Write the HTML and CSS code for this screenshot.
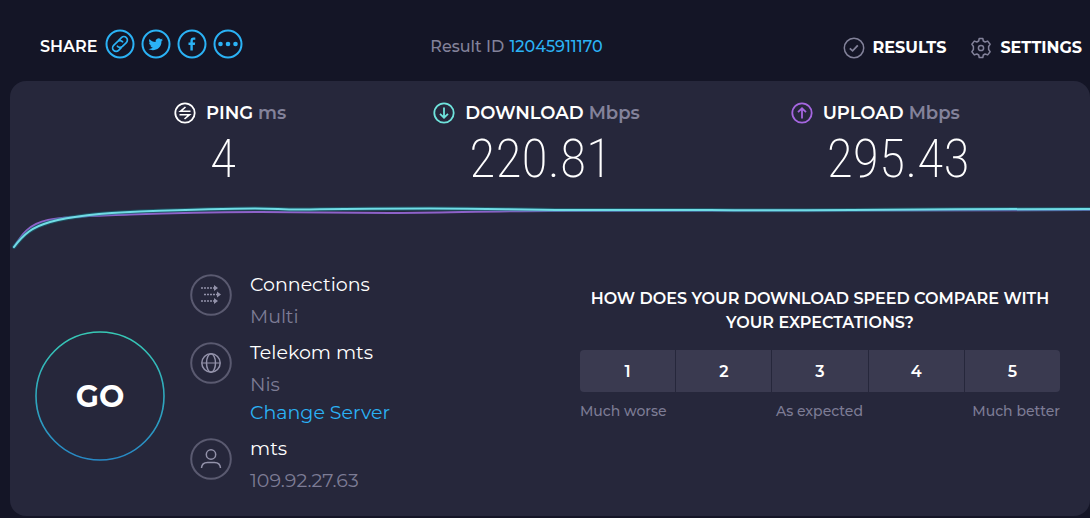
FILE: index.html
```html
<!DOCTYPE html>
<html lang="en">
<head>
<meta charset="utf-8">
<meta name="viewport" content="width=device-width, initial-scale=1">
<title>Speed test result</title>
<link rel="stylesheet" href="styles.css">
</head>
<body>
<header class="topbar">
  <div class="share">
    <span class="share-label">SHARE</span>
    <a class="share-link" href="#link" aria-label="Copy link">
      <svg viewBox="0 0 30 30"><circle cx="15" cy="15" r="13.5"/><g transform="rotate(-45 15 15)" stroke-width="1.700"><path d="M14 18.500H9.500a3.500 3.500 0 0 1 0-7H15a3.500 3.500 0 0 1 3.200 4.500M16 11.500h4.500a3.500 3.500 0 0 1 0 7H15a3.500 3.500 0 0 1-3.200-4.500"/></g></svg>
    </a>
    <a class="share-link" href="#twitter" aria-label="Twitter">
      <svg viewBox="0 0 30 30"><circle cx="15" cy="15" r="13.5"/><path class="solid" d="M22 10.700c-.5.300-1.100.400-1.700.500.600-.400 1.100-.900 1.300-1.600-.6.300-1.200.600-1.900.700a3 3 0 0 0-5.100 2.700c-2.500-.1-4.700-1.300-6.100-3.100-.9 1.500-.4 3.100.9 4-.5 0-.9-.1-1.300-.4 0 1.500 1 2.700 2.400 3-.4.100-.9.100-1.300 0 .4 1.200 1.500 2 2.800 2.100A6 6 0 0 1 7.500 20c4 2.500 13 1.300 13-7.700.6-.4 1.100-1 1.500-1.600z"/></svg>
    </a>
    <a class="share-link" href="#facebook" aria-label="Facebook">
      <svg viewBox="0 0 30 30"><circle cx="15" cy="15" r="13.5"/><path class="solid" d="M13.400 21.500V16h-1.900v-2.400h1.900v-1.700c0-2.200 1.300-3.400 3.100-3.400h1.800v2.200h-1.200c-1 0-1.300.5-1.300 1.300v1.600h2.400l-.4 2.400h-2v5.500z"/></svg>
    </a>
    <a class="share-link" href="#more" aria-label="More">
      <svg viewBox="0 0 30 30"><circle cx="15" cy="15" r="13.5"/><g class="solid"><circle cx="7.500" cy="15" r="2.300"/><circle cx="15" cy="15" r="2.300"/><circle cx="22.500" cy="15" r="2.300"/></g></svg>
    </a>
  </div>
  <p class="result">Result ID <a href="#result">12045911170</a></p>
  <nav class="menu">
    <a href="#results">
      <svg viewBox="0 0 22 22"><circle cx="11" cy="11" r="9.700"/><path d="M6.800 11.300l2.800 2.500 5.200-5.400" stroke-width="1.800"/></svg>
      RESULTS
    </a>
    <a href="#settings">
      <svg viewBox="0 0 22 22"><path stroke-linejoin="round" d="M9.200 1.500h3.600l.5 2.500 1.800 1 2.600-.9 2.400 3.200-1.500 2.200v3l1.500 2.200-2.400 3.200-2.600-.9-1.800 1-.5 2.500H9.200L8.700 18l-1.800-1-2.600.9-2.400-3.200 1.500-2.200v-3L1.900 7.300l2.400-3.200 2.600.9 1.800-1z"/><circle cx="11" cy="11" r="2.600"/></svg>
      SETTINGS
    </a>
  </nav>
</header>

<main class="panel">
  <section class="stats">
    <div class="stat">
      <h2 class="stat-name">
        <svg class="ping" viewBox="0 0 22 22"><circle cx="11" cy="11" r="9.700"/><path stroke-width="1.600" d="M16.500 9.300H6.500l5-4.300M5.500 12.700h10l-5 4.300"/></svg>
        <span>PING <small>ms</small></span>
      </h2>
      <p class="stat-value">4</p>
    </div>
    <div class="stat">
      <h2 class="stat-name">
        <svg class="down" viewBox="0 0 22 22"><circle cx="11" cy="11" r="9.700"/><path d="M11 5.500v10M7 11.800l4 3.900 4-3.900"/></svg>
        <span>DOWNLOAD <small>Mbps</small></span>
      </h2>
      <p class="stat-value">220.81</p>
    </div>
    <div class="stat">
      <h2 class="stat-name">
        <svg class="up" viewBox="0 0 22 22"><circle cx="11" cy="11" r="9.700"/><path d="M11 16.500v-10M7 10.200l4-3.900 4 3.900"/></svg>
        <span>UPLOAD <small>Mbps</small></span>
      </h2>
      <p class="stat-value">295.43</p>
    </div>
  </section>

  <svg class="chart" viewBox="0 0 1080 60" preserveAspectRatio="none" aria-hidden="true">
    <path class="line-up" d="M4 51C12 38 19 28 38 24S80 20 120 18.500 200 16 250 16 330 17 380 17 480 15 540 15L1080 14"/>
    <path class="glow" d="M4 51C14 38 22 31 40 26S90 17 130 15.500 220 12.500 245 12.500 270 14 300 13.500 350 12.500 420 12.500 500 14 560 14H700C800 15 900 13 1080 13"/>
    <path class="line-down" d="M4 51C14 38 22 31 40 26S90 17 130 15.500 220 12.500 245 12.500 270 14 300 13.500 350 12.500 420 12.500 500 14 560 14H700C800 15 900 13 1080 13"/>
  </svg>

  <section class="lower">
    <button class="go" type="button">
      <svg viewBox="0 0 130 130" aria-hidden="true">
        <defs><linearGradient id="ring" x1="0" y1="0" x2="0" y2="1"><stop offset="0" stop-color="#37c9b5"/><stop offset="1" stop-color="#2788c5"/></linearGradient></defs>
        <circle cx="65" cy="65" r="64" fill="none" stroke="url(#ring)" stroke-width="1.600"/>
      </svg>
      <span>GO</span>
    </button>

    <div class="details">
      <div class="detail">
        <svg viewBox="0 0 42 42"><circle class="ring" cx="21" cy="21" r="19.800"/><path stroke-dasharray="2 1" d="M11 14h14M14 20.500h14M11 27h14"/><path class="tip" d="M24 11l4 3-4 3zM27 17.500l4 3-4 3zM24 24l4 3-4 3z"/></svg>
        <div><h3>Connections</h3><p>Multi</p></div>
      </div>
      <div class="detail">
        <svg viewBox="0 0 42 42"><circle class="ring" cx="21" cy="21" r="19.800"/><circle cx="21" cy="21" r="9.200"/><ellipse cx="21" cy="21" rx="4.500" ry="9.200"/><path d="M12 21h18" stroke-width="1.200"/></svg>
        <div><h3>Telekom mts</h3><p>Nis</p><a href="#servers">Change Server</a></div>
      </div>
      <div class="detail">
        <svg viewBox="0 0 42 42"><circle class="ring" cx="21" cy="21" r="19.800"/><circle cx="21" cy="16.500" r="4.700"/><path d="M11.500 30c.3-4 3-5.500 6-5.500h7c3 0 5.700 1.500 6 5.500"/></svg>
        <div><h3>mts</h3><p>109.92.27.63</p></div>
      </div>
    </div>

    <div class="survey">
      <h2>HOW DOES YOUR DOWNLOAD SPEED COMPARE WITH YOUR EXPECTATIONS?</h2>
      <div class="scale">
        <button type="button">1</button><button type="button">2</button><button type="button">3</button><button type="button">4</button><button type="button">5</button>
      </div>
      <div class="legend"><span>Much worse</span><span>As expected</span><span>Much better</span></div>
    </div>
  </section>
</main>
</body>
</html>
```
FILE: styles.css
```css
* { box-sizing: border-box; margin: 0; padding: 0; }
body {
  min-height: 100vh;
  background: #141526;
  color: #fff;
  font-family: Montserrat, Inter, "Liberation Sans", sans-serif;
  font-size: 16px;
}
a { color: #2bb2f5; text-decoration: none; }
button { border: 0; color: #fff; font: inherit; font-weight: 600; cursor: pointer; }
svg { flex: none; fill: none; }

.topbar {
  display: grid;
  grid-template-columns: 391fr 413fr auto;
  align-items: center;
  padding: 26px 8px 20px 40px;
}
.share { display: flex; align-items: center; gap: 6px; height: 35px; }
.share-label { font-weight: 600; line-height: 20px; margin: 6px 2px 0 0; }
.share-link { display: flex; }
.share-link svg { width: 30px; height: 30px; stroke: #2bb2f5; stroke-width: 2; }
.share-link .solid { fill: #2bb2f5; stroke: none; }
.result { color: #83829a; font-weight: 500; line-height: 20px; padding-top: 6px; }
.result a { margin-left: 1px; }
.menu { display: flex; gap: 24px; padding-top: 8px; }
.menu a { display: flex; align-items: center; gap: 8px; color: #fff; font-weight: 700; line-height: 22px; }
.menu svg { width: 22px; height: 22px; stroke: #83829a; stroke-width: 1.5; }

.panel {
  margin: 0 0 2px 10px;
  padding-bottom: 21px;
  border-radius: 16px;
  background: #26273b;
  overflow: hidden;
}
.stats { display: grid; grid-template-columns: 259fr 357fr 299fr; padding: 20px 0 0 164px; }
.stat-name { display: flex; align-items: center; gap: 10px; font-size: 18px; font-weight: 600; line-height: 24px; }
.stat-name small { color: #83829a; font-size: 18px; font-weight: 600; }
.stat-name svg { width: 22px; height: 22px; stroke-width: 1.8; }
.ping { stroke: #fff; }
.down { stroke: #6fe3dc; }
.up { stroke: #a566e0; }
.stat-value {
  padding-left: 36px;
  color: #fff;
  font-family: "Roboto Condensed", "Open Sans Condensed", Lato, sans-serif;
  font-size: 54px;
  font-weight: 200;
  line-height: 68px;
}
.chart { display: block; width: 100%; height: 60px; margin-top: 3px; }
.chart path { stroke-width: 2; stroke-linecap: round; vector-effect: non-scaling-stroke; }
.chart .line-up { stroke: #8d62c9; }
.chart .line-down { stroke: #70dce5; }
.chart .glow { stroke: #167c88; stroke-width: 4; opacity: .5; }

.lower { display: flex; align-items: flex-start; padding: 15px 30px 0 25px; }
.go { display: grid; place-items: center; margin: 60px 25px 0 0; border-radius: 50%; background: none; font-size: 30px; font-weight: 700; }
.go > * { grid-area: 1 / 1; }
.go svg { width: 130px; height: 130px; }
.details { display: grid; gap: 8px; flex: 1; }
.detail { display: flex; align-items: flex-start; gap: 18px; font-size: 19px; line-height: 28px; }
.detail svg { width: 42px; height: 42px; margin-top: 3px; stroke: #9392aa; stroke-width: 1.5; }
.detail .ring { stroke: #5a5a70; stroke-width: 2; }
.detail .tip { fill: #9392aa; stroke: none; }
.detail h3 { margin-bottom: 4px; font-size: 19px; font-weight: 400; }
.detail p { color: #7d7c95; }
.survey { flex: 0 1 480px; padding-top: 16px; }
.survey h2 { font-size: 16px; font-weight: 600; line-height: 24px; text-align: center; }
.scale { display: grid; grid-template-columns: repeat(5, 1fr); gap: 1px; margin-top: 15px; border-radius: 4px; overflow: hidden; }
.scale button { height: 42px; background: #3a3a50; }
.legend { display: flex; justify-content: space-between; margin-top: 8px; color: #7d7c95; font-size: 14px; font-weight: 500; line-height: 22px; }
```
